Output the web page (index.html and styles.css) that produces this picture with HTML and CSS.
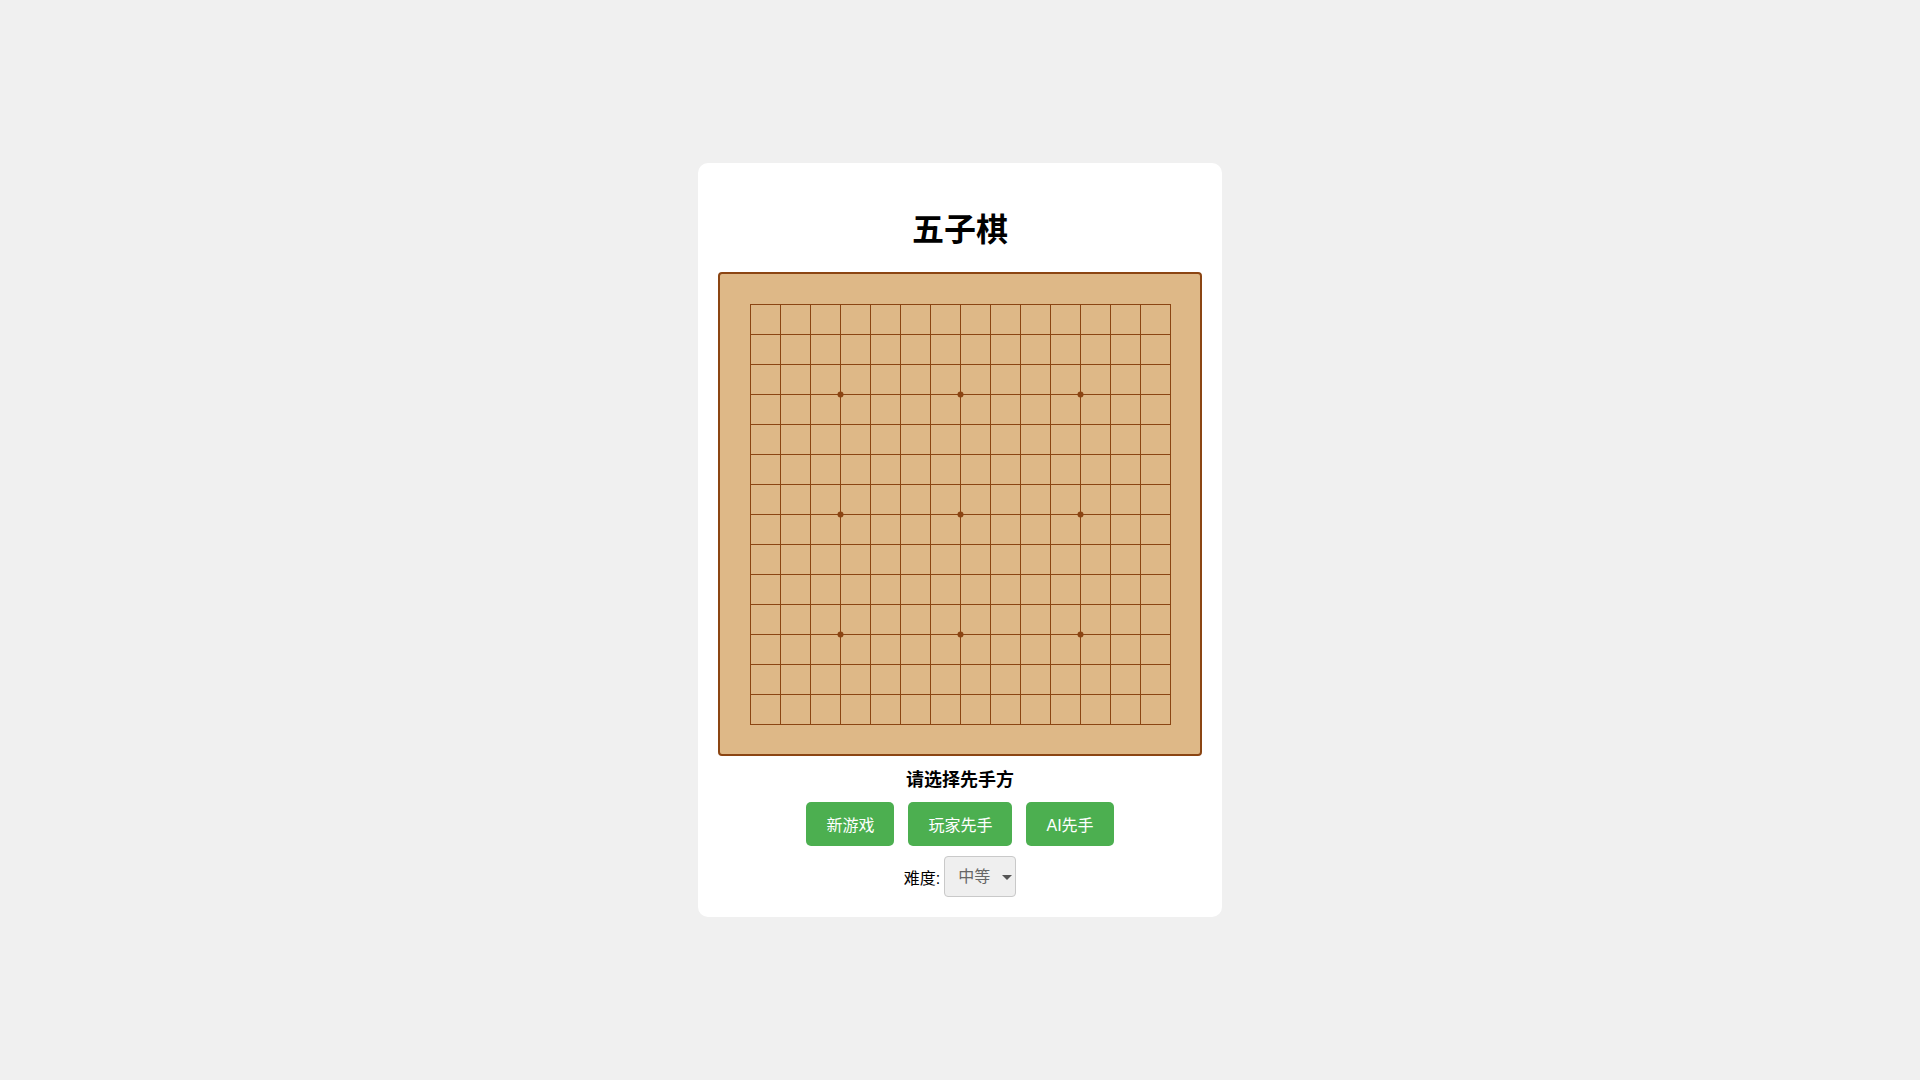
FILE: index.html
```html
<!DOCTYPE html>
<html lang="zh-CN">
<head>
<meta charset="UTF-8">
<title>五子棋</title>
<link rel="stylesheet" href="styles.css">
</head>
<body>
<div class="game">
  <h1 class="title">五子棋</h1>
  <div class="board">
    <svg class="grid" width="450" height="450" viewBox="0 0 450 450" shape-rendering="crispEdges">
      <g stroke="#8b4513" stroke-width="1">
        <line x1="15" y1="15.5" x2="436" y2="15.5"/>
        <line x1="15" y1="45.5" x2="436" y2="45.5"/>
        <line x1="15" y1="75.5" x2="436" y2="75.5"/>
        <line x1="15" y1="105.5" x2="436" y2="105.5"/>
        <line x1="15" y1="135.5" x2="436" y2="135.5"/>
        <line x1="15" y1="165.5" x2="436" y2="165.5"/>
        <line x1="15" y1="195.5" x2="436" y2="195.5"/>
        <line x1="15" y1="225.5" x2="436" y2="225.5"/>
        <line x1="15" y1="255.5" x2="436" y2="255.5"/>
        <line x1="15" y1="285.5" x2="436" y2="285.5"/>
        <line x1="15" y1="315.5" x2="436" y2="315.5"/>
        <line x1="15" y1="345.5" x2="436" y2="345.5"/>
        <line x1="15" y1="375.5" x2="436" y2="375.5"/>
        <line x1="15" y1="405.5" x2="436" y2="405.5"/>
        <line x1="15" y1="435.5" x2="436" y2="435.5"/>
        <line y1="15" x1="15.5" y2="436" x2="15.5"/>
        <line y1="15" x1="45.5" y2="436" x2="45.5"/>
        <line y1="15" x1="75.5" y2="436" x2="75.5"/>
        <line y1="15" x1="105.5" y2="436" x2="105.5"/>
        <line y1="15" x1="135.5" y2="436" x2="135.5"/>
        <line y1="15" x1="165.5" y2="436" x2="165.5"/>
        <line y1="15" x1="195.5" y2="436" x2="195.5"/>
        <line y1="15" x1="225.5" y2="436" x2="225.5"/>
        <line y1="15" x1="255.5" y2="436" x2="255.5"/>
        <line y1="15" x1="285.5" y2="436" x2="285.5"/>
        <line y1="15" x1="315.5" y2="436" x2="315.5"/>
        <line y1="15" x1="345.5" y2="436" x2="345.5"/>
        <line y1="15" x1="375.5" y2="436" x2="375.5"/>
        <line y1="15" x1="405.5" y2="436" x2="405.5"/>
        <line y1="15" x1="435.5" y2="436" x2="435.5"/>
      </g>
      <g fill="#8b4513" shape-rendering="auto">
        <circle cx="105.5" cy="105.5" r="3"/>
        <circle cx="225.5" cy="105.5" r="3"/>
        <circle cx="345.5" cy="105.5" r="3"/>
        <circle cx="105.5" cy="225.5" r="3"/>
        <circle cx="225.5" cy="225.5" r="3"/>
        <circle cx="345.5" cy="225.5" r="3"/>
        <circle cx="105.5" cy="345.5" r="3"/>
        <circle cx="225.5" cy="345.5" r="3"/>
        <circle cx="345.5" cy="345.5" r="3"/>
      </g>
    </svg>
  </div>
  <div class="status">请选择先手方</div>
  <div class="controls">
    <button class="btn">新游戏</button>
    <button class="btn">玩家先手</button>
    <button class="btn">AI先手</button>
  </div>
  <div class="difficulty">
    <label class="diff-label" for="level">难度:</label>
    <span class="select-wrap">
      <select id="level" class="select" disabled>
        <option>简单</option>
        <option selected>中等</option>
        <option>困难</option>
      </select>
    </span>
  </div>
</div>
</body>
</html>
```

FILE: styles.css
```css
html, body {
  margin: 0;
  padding: 0;
}

body {
  background: #f0f0f0;
  font-family: "Liberation Sans", "Noto Sans CJK SC", sans-serif;
  min-height: 100vh;
  display: flex;
  align-items: center;
  justify-content: center;
}

.game {
  background: #fff;
  border-radius: 10px;
  padding: 20px;
  display: flex;
  flex-direction: column;
  align-items: center;
}

.title {
  font-size: 32px;
  font-weight: bold;
  margin: 24px 0 18px;
  line-height: 47px;
  color: #000;
}

.board {
  background: #deb887;
  border: 2px solid #8b4513;
  border-radius: 4px;
  padding: 15px;
  line-height: 0;
}

.grid {
  display: block;
}

.status {
  margin-top: 11px;
  font-size: 18px;
  font-weight: bold;
  line-height: 26px;
  color: #000;
}

.controls {
  margin-top: 9px;
  display: flex;
  gap: 14px;
}

.btn {
  background: #4caf50;
  color: #fff;
  border: none;
  border-radius: 5px;
  padding: 0 20px;
  height: 44px;
  font-family: "Liberation Sans", "Noto Sans CJK SC", sans-serif;
  font-size: 16px;
  cursor: pointer;
}

.difficulty {
  margin-top: 10px;
  display: flex;
  align-items: center;
  gap: 4px;
  font-size: 16px;
}

.diff-label {
  color: #000;
  font-weight: normal;
}

.select-wrap {
  position: relative;
  display: inline-block;
}

.select {
  appearance: none;
  -webkit-appearance: none;
  width: 72px;
  height: 41px;
  padding: 0 0 0 13px;
  font-family: "Liberation Sans", "Noto Sans CJK SC", sans-serif;
  font-size: 16px;
  color: #666;
  background: #efefef;
  border: 1px solid #c9c9c9;
  border-radius: 4px;
  opacity: 1;
}

.select-wrap::after {
  content: "";
  position: absolute;
  right: 4px;
  top: 19px;
  border-left: 5px solid transparent;
  border-right: 5px solid transparent;
  border-top: 5px solid #555;
  pointer-events: none;
}
```
